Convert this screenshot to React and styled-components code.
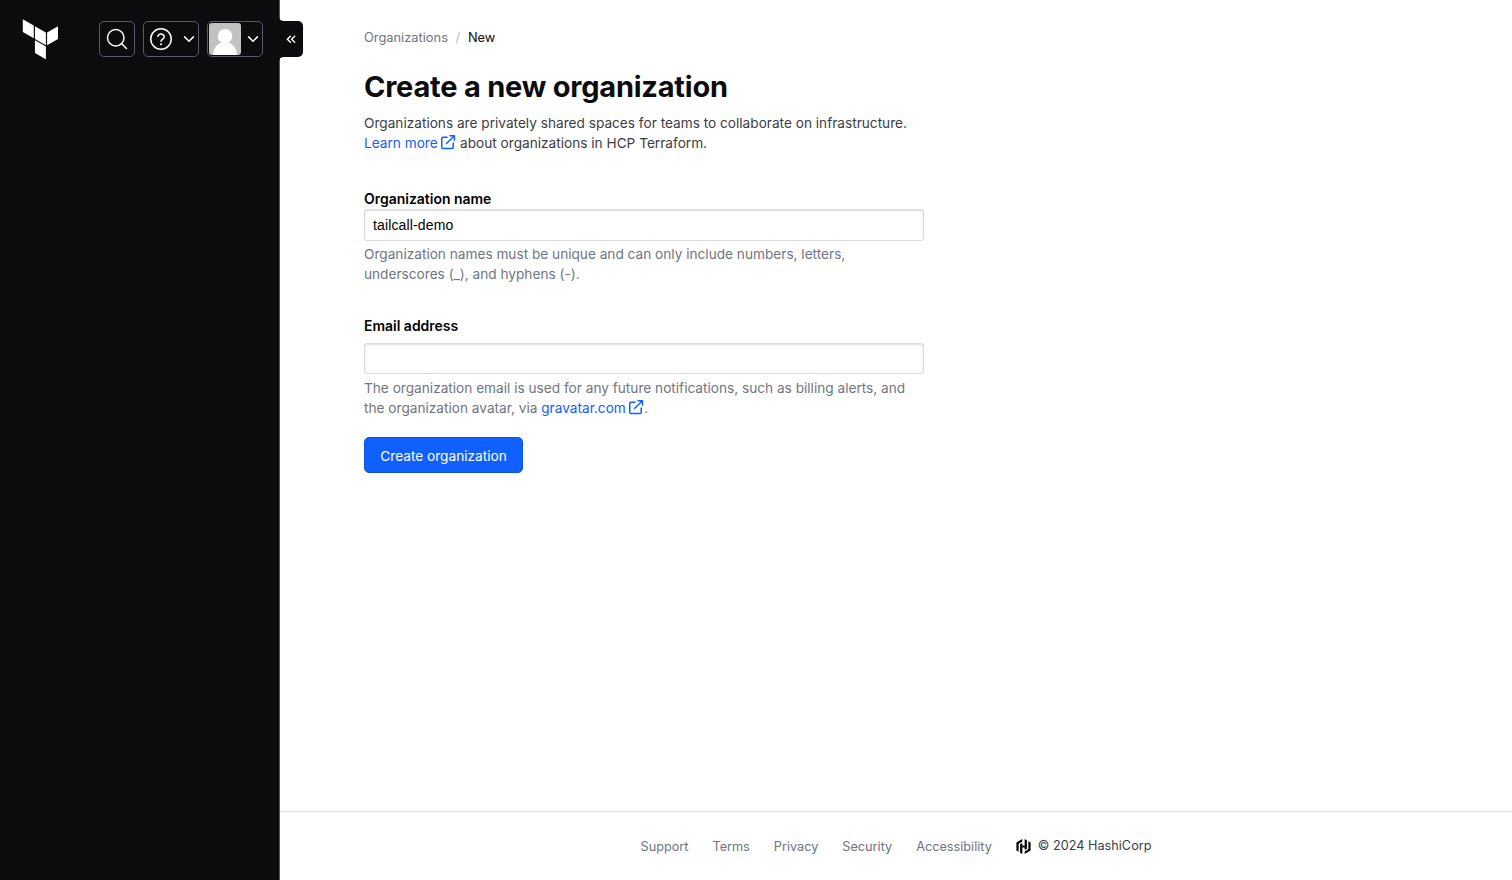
import React from 'react';
import styled, { createGlobalStyle } from 'styled-components';
import { SiHashicorp, SiTerraform } from 'react-icons/si';

const GlobalStyle = createGlobalStyle`
  *, *::before, *::after { box-sizing: border-box; }
  body {
    margin: 0;
    background: #fff;
    font-family: Inter, "Liberation Sans", sans-serif;
    font-size: 13.65px;
    line-height: 20px;
    color: #3b3d45;
  }
`;

const Shell = styled.div`
  display: grid;
  grid-template-columns: 280px 1fr;
  min-height: 100vh;
`;

const Sidebar = styled.aside`
  position: relative;
  background: #0c0c0e;
  border-right: 1px solid #56575d;
`;

const SidebarHeader = styled.div`
  display: flex;
  align-items: center;
  justify-content: space-between;
  height: 78px;
  padding: 0 16px 0 20.4px;
`;

const HomeLink = styled.a`
  display: flex;
  color: #fff;
`;

const HomeMark = styled(SiTerraform)`
  width: 40px;
  height: 40px;
  overflow: visible;

  path {
    transform: translate(0.25px, 0.15px);
  }
`;

const Actions = styled.div`
  display: flex;
  gap: 8px;
`;

const ActionButton = styled.button`
  display: flex;
  align-items: center;
  justify-content: ${(p) => (p.$menu ? 'space-between' : 'center')};
  width: ${(p) => (p.$menu ? 56 : 36)}px;
  height: 36px;
  padding: ${(p) => (p.$avatar ? '0 1px' : p.$menu ? '0 1px 0 5px' : '0')};
  border: 1px solid #565a69;
  border-radius: 5px;
  background: transparent;
  color: #fff;
`;

const MenuChevron = styled.svg`
  width: 16px;
  height: 16px;
`;

const AvatarImage = styled.svg`
  width: 32px;
  height: 32px;
  border-radius: 3px;
`;

const CollapseTab = styled.button`
  position: absolute;
  top: 21px;
  left: 279px;
  display: flex;
  align-items: center;
  justify-content: center;
  width: 24px;
  height: 36px;
  padding: 0;
  border: 0;
  border-radius: 0 5px 5px 0;
  background: #0c0c0e;
  color: #fff;

  &::before,
  &::after {
    content: '';
    position: absolute;
    left: 0;
    width: 4px;
    height: 4px;
  }
  &::before {
    top: -4px;
    background: radial-gradient(circle at 100% 0, transparent 3.5px, #0c0c0e 4px);
  }
  &::after {
    bottom: -4px;
    background: radial-gradient(circle at 100% 100%, transparent 3.5px, #0c0c0e 4px);
  }
`;

const Page = styled.div`
  display: flex;
  flex-direction: column;
`;

const Content = styled.main`
  flex: 1;
  width: 644px;
  padding: 28px 0 0 84px;
`;

const Breadcrumb = styled.nav`
  display: flex;
  font-size: 12.85px;
  color: #656a76;
`;

const Crumb = styled.span`
  color: ${(p) => (p.$current ? '#0c0c0e' : '#6f7480')};
`;

const Separator = styled.span`
  width: 20px;
  text-align: center;
  color: #b9bbc2;
`;

const Title = styled.h1`
  margin: 19px 0 0;
  font-size: 29px;
  line-height: 40px;
  font-weight: 700;
  letter-spacing: -0.22px;
  color: #0c0c0e;
  white-space: nowrap;
`;

const Intro = styled.p`
  margin: 6px 0 0;
  white-space: nowrap;
`;

const Link = styled.a`
  color: #1060ff;
`;

const LinkIcon = styled.svg`
  width: 16px;
  height: 16px;
  margin: 0 0.5px 0 2px;
  vertical-align: -2px;
`;

const Form = styled.form`
  display: flex;
  flex-direction: column;
  align-items: flex-start;
  margin-top: 36px;
`;

const Field = styled.div`
  display: flex;
  flex-direction: column;
  width: 560px;
  margin-bottom: ${(p) => p.$after}px;
`;

const Label = styled.label`
  margin-bottom: ${(p) => p.$gap}px;
  font-size: 14px;
  font-weight: 600;
  letter-spacing: -0.02px;
  color: #000;
`;

const Input = styled.input`
  height: ${(p) => p.$height}px;
  padding: 0 8px 1px;
  border: 1px solid #dbdbdc;
  border-radius: 2px;
  box-shadow: inset 0 1px 2px #dedede;
  background: #fff;
  font: 14px "Liberation Sans", Arial, sans-serif;
  letter-spacing: 0.14px;
  color: #000;
  outline: none;
`;

const Help = styled.p`
  margin: ${(p) => p.$gap}px 0 0;
  color: #6f7682;
  white-space: nowrap;
`;

const SubmitButton = styled.button`
  height: 36px;
  width: 159px;
  padding: 1px 0 0;
  border: 1px solid #0d53e0;
  border-radius: 5px;
  background: #1060ff;
  font: 13.65px Inter, "Liberation Sans", sans-serif;
  color: #fff;
`;

const Footer = styled.footer`
  display: flex;
  align-items: center;
  justify-content: center;
  gap: 24px;
  height: 69px;
  border-top: 1px solid #dedfe3;
  font-size: 12.7px;
`;

const FooterLink = styled.a`
  padding-top: 2px;
  color: #6f7480;
`;

const Copyright = styled.span`
  display: flex;
  align-items: center;
  gap: 7px;
`;

const HashiMark = styled(SiHashicorp)`
  width: 15px;
  height: 15px;
  color: #000;
`;

function Chevron() {
  return (
    <MenuChevron viewBox="0 0 16 16" fill="none" stroke="currentColor" strokeWidth="1.5" strokeLinecap="round" strokeLinejoin="round">
      <path d="M3.6 5.9 8 10.2l4.4-4.3" />
    </MenuChevron>
  );
}

function External() {
  return (
    <LinkIcon viewBox="0 0 16 16" fill="none" stroke="currentColor" strokeWidth="1.5" strokeLinecap="round" strokeLinejoin="round">
      <path d="M10 1.75h4.5v4.5M14.2 2.05 6.5 9.5M7 3.25H3A1.25 1.25 0 0 0 1.75 4.5v8.75A1.25 1.25 0 0 0 3 14.5h9a1.25 1.25 0 0 0 1.25-1.25V9" />
    </LinkIcon>
  );
}

const footerLinks = ['Support', 'Terms', 'Privacy', 'Security', 'Accessibility'];

export default function App() {
  return (
    <>
      <GlobalStyle />
      <Shell>
        <Sidebar>
          <SidebarHeader>
            <HomeLink aria-label="Home"><HomeMark /></HomeLink>
            <Actions>
              <ActionButton aria-label="Search">
                <svg width="24" height="24" viewBox="0 0 24 24" fill="none" stroke="currentColor" strokeWidth="1.5" strokeLinecap="round">
                  <circle cx="10.75" cy="10.75" r="8.25" />
                  <path d="m16.7 16.7 4.8 4.8" />
                </svg>
              </ActionButton>
              <ActionButton $menu aria-label="Help">
                <svg width="24" height="24" viewBox="0 0 24 24" fill="none" stroke="currentColor" strokeWidth="1.5" strokeLinecap="round" strokeLinejoin="round">
                  <circle cx="12" cy="12" r="10.25" />
                  <path d="M8.8 9.2a3.3 3.3 0 0 1 6.4.8c0 2.1-3.2 2.6-3.2 4.2" />
                  <circle cx="12" cy="17.2" r="1" fill="currentColor" stroke="none" />
                </svg>
                <Chevron />
              </ActionButton>
              <ActionButton $menu $avatar aria-label="Account">
                <AvatarImage viewBox="0 0 32 32">
                  <rect width="32" height="32" fill="#c2c2c2" />
                  <circle cx="16" cy="13.2" r="7.3" fill="#fff" />
                  <path d="M4 32c.4-7 4.8-13 12-13s11.6 6 12 13z" fill="#fff" />
                </AvatarImage>
                <Chevron />
              </ActionButton>
            </Actions>
          </SidebarHeader>
          <CollapseTab aria-label="Collapse">
            <svg width="16" height="16" viewBox="0 0 16 16" fill="none" stroke="currentColor" strokeWidth="1.4" strokeLinecap="round" strokeLinejoin="round">
              <path d="M7.4 5.3 4.3 8.3l3.1 3M11.7 5.3 8.6 8.3l3.1 3" />
            </svg>
          </CollapseTab>
        </Sidebar>
        <Page>
          <Content>
            <Breadcrumb>
              <Crumb>Organizations</Crumb>
              <Separator>/</Separator>
              <Crumb $current>New</Crumb>
            </Breadcrumb>
            <Title>Create a new organization</Title>
            <Intro>
              Organizations are privately shared spaces for teams to collaborate on infrastructure.
              <br />
              <Link>Learn more<External /></Link> about organizations in HCP Terraform.
            </Intro>
            <Form>
              <Field $after={32}>
                <Label $gap={0} htmlFor="org-name">Organization name</Label>
                <Input $height={32} id="org-name" defaultValue="tailcall-demo" />
                <Help $gap={3}>
                  Organization names must be unique and can only include numbers, letters,
                  <br />
                  underscores (_), and hyphens (-).
                </Help>
              </Field>
              <Field $after={19}>
                <Label $gap={7} htmlFor="org-email">Email address</Label>
                <Input $height={31} id="org-email" />
                <Help $gap={4}>
                  The organization email is used for any future notifications, such as billing alerts, and
                  <br />
                  the organization avatar, via <Link>gravatar.com<External /></Link>.
                </Help>
              </Field>
              <SubmitButton type="button">Create organization</SubmitButton>
            </Form>
          </Content>
          <Footer>
            {footerLinks.map((name) => <FooterLink key={name}>{name}</FooterLink>)}
            <Copyright><HashiMark />© 2024 HashiCorp</Copyright>
          </Footer>
        </Page>
      </Shell>
    </>
  );
}
